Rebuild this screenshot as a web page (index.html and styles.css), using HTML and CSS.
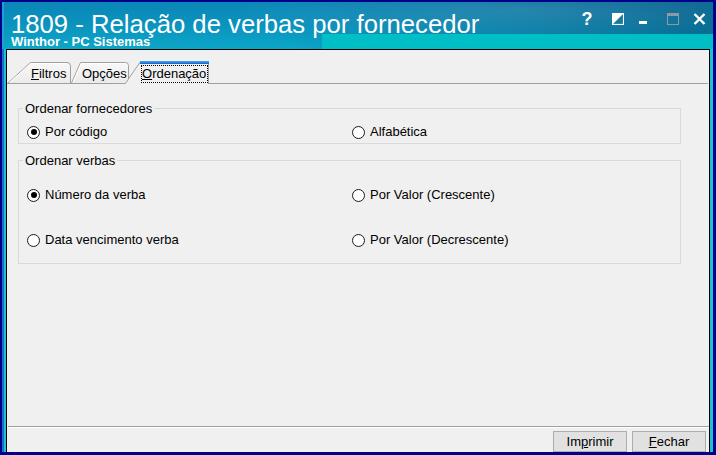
FILE: index.html
```html
<!DOCTYPE html>
<html lang="pt-BR">
<head>
<meta charset="utf-8">
<title>1809 - Relação de verbas por fornecedor</title>
<link rel="stylesheet" href="styles.css">
</head>
<body>
<div class="window">
  <div class="frame">
    <header class="titlebar">
      <div class="titles">
        <div class="title">1809 - Relação de verbas por fornecedor</div>
        <div class="subtitle">Winthor - PC Sistemas</div>
      </div>
      <div class="controls">
        <span class="help">?</span>
        <svg class="ic ic-restore" width="12" height="12" viewBox="0 0 12 12"><rect x="0.5" y="0.5" width="11" height="11" fill="none" stroke="#fff" stroke-width="1.2"/><polygon points="0,0 12,0 0,12" fill="#fff"/></svg>
        <svg class="ic ic-min" width="8" height="3" viewBox="0 0 8 3"><rect x="0" y="0" width="8" height="3" fill="#fff"/></svg>
        <svg class="ic ic-max" width="12" height="12" viewBox="0 0 12 12"><rect x="0.5" y="0.5" width="11" height="11" fill="none" stroke="#8c9ba2" stroke-width="1"/><rect x="0" y="0" width="12" height="3" fill="#8c9ba2"/></svg>
        <svg class="ic ic-close" width="13" height="12" viewBox="0 0 13 12"><path d="M1.5 1 L11.5 11 M11.5 1 L1.5 11" stroke="#fff" stroke-width="2.4" fill="none"/></svg>
      </div>
    </header>
    <main class="panel">
      <nav class="tabstrip">
        <span class="tab tab-filtros"><u>F</u>iltros</span>
        <span class="tab tab-opcoes">Opções</span>
        <span class="tab tab-ordenacao"><span class="focus"><u>O</u>rdenação</span></span>
      </nav>
      <section class="content">
        <fieldset class="group group-forn">
          <legend>Ordenar fornecedores</legend>
          <div class="grid">
            <label class="opt"><span class="radio checked"></span>Por código</label>
            <label class="opt"><span class="radio"></span>Alfabética</label>
          </div>
        </fieldset>
        <fieldset class="group group-verbas">
          <legend>Ordenar verbas</legend>
          <div class="grid grid-verbas">
            <label class="opt"><span class="radio checked"></span>Número da verba</label>
            <label class="opt"><span class="radio"></span>Por Valor (Crescente)</label>
            <label class="opt"><span class="radio"></span>Data vencimento verba</label>
            <label class="opt"><span class="radio"></span>Por Valor (Decrescente)</label>
          </div>
        </fieldset>
      </section>
      <footer class="footer">
        <div class="separator"></div>
        <div class="buttons">
          <button class="btn btn-print">Im<u>p</u>rimir</button>
          <button class="btn btn-close"><u>F</u>echar</button>
        </div>
      </footer>
    </main>
  </div>
</div>
</body>
</html>
```
FILE: styles.css
```css
* { box-sizing: border-box; }
html, body { margin: 0; padding: 0; background: #000080; }
body { width: 716px; height: 455px; overflow: hidden; }

.window {
  width: 716px;
  height: 455px;
  background: #00008a;
  padding: 2px 3px 3px 2px;
}
.frame {
  height: 100%;
  display: flex;
  flex-direction: column;
  padding: 0 3px 0 4px;
  background: linear-gradient(to right, #1a6ec8 0 2px, #1ec0d6 2px);
}

/* title bar */
.titlebar {
  height: 47px;
  flex: none;
  display: flex;
  margin: 0 -3px 0 -4px;
  padding-left: 9px;
  background:
    linear-gradient(#00bec6, #00bec6) no-repeat right bottom / calc(100% - 320px) 15px,
    linear-gradient(to right, #1ba2d2 0 2px, transparent 2px, transparent 706px, #0a6f95 706px),
    radial-gradient(ellipse 420px 40px at 520px 8px, rgba(255,255,255,0.12), rgba(255,255,255,0) 70%),
    linear-gradient(to right, rgba(0,0,0,0) 40%, rgba(0,30,70,0.35) 100%),
    linear-gradient(180deg, #0a86b6 0%, #0b92bd 45%, #0ba6c8 100%);
  color: #fff;
  font-family: "Liberation Sans", Arial, sans-serif;
}
.titles { padding-top: 10px; }
.title {
  font-size: 25.7px;
  line-height: 24px;
  white-space: nowrap;
}
.subtitle {
  font-size: 13px;
  line-height: 12px;
  font-weight: bold;
  white-space: nowrap;
}
.controls {
  margin-left: auto;
  display: flex;
  align-items: flex-start;
  padding-top: 9px;
  padding-right: 7px;
}
.help {
  width: 12px;
  font-size: 18px;
  line-height: 16px;
  font-weight: bold;
  text-align: center;
}
.ic { display: block; flex: none; }
.ic-restore { margin-left: 19px; margin-top: 2px; }
.ic-min { margin-left: 15px; margin-top: 10px; }
.ic-max { margin-left: 20px; margin-top: 2px; }
.ic-close { margin-left: 14px; margin-top: 2px; }

/* panel */
.panel {
  flex: 1;
  min-height: 0;
  display: flex;
  flex-direction: column;
  background: #f0f0f0;
  border: 1px solid #000;
  border-bottom: none;
  font-family: "Liberation Sans", Arial, sans-serif;
  font-size: 13px;
  color: #000;
}

.tabstrip {
  height: 34px;
  flex: none;
  display: flex;
  align-items: flex-start;
  padding-top: 15px;
  padding-left: 23px;
  background: url("data:image/svg+xml;utf8,<svg xmlns='http://www.w3.org/2000/svg' width='701' height='34'><defs><linearGradient id='g' x1='0' y1='0' x2='0' y2='1'><stop offset='0' stop-color='%23f8f8f8'/><stop offset='1' stop-color='%23ebebeb'/></linearGradient><linearGradient id='b' x1='0' y1='0' x2='0' y2='1'><stop offset='0' stop-color='%2355a6f0'/><stop offset='1' stop-color='%230a64cc'/></linearGradient></defs><path d='M64.5 33 L73.5 12.5 H118.5 Q121.5 12.5 121.5 15.5 V33' fill='url(%23g)' stroke='%23a0a0a0'/><path d='M1 33 L23.5 12.5 H60 Q63.5 12.5 63.5 16 V33' fill='url(%23g)' stroke='%23a0a0a0'/><path d='M2.5 32.5 L24 13.5 H60' fill='none' stroke='%23ffffff'/><path d='M66 32.5 L74.3 13.5 H118' fill='none' stroke='%23ffffff'/><path d='M118 34 L133.5 11.5 H201.5 V34' fill='%23f0f0f0' stroke='%23a0a0a0'/><rect x='133' y='11' width='69' height='3' fill='url(%23b)'/><path d='M0 33.5 H118 M201 33.5 H701' stroke='%23a0a0a0'/></svg>") no-repeat 0 0;
}
.tab {
  display: block;
  line-height: 16px;
  border: 1px solid transparent;
  white-space: nowrap;
}
.tab-filtros { width: 51px; }
.tab-opcoes { width: 60px; }
.tab-ordenacao { border: none; }
.focus {
  display: block;
  line-height: 16px;
  border: 1px dotted #000;
  padding: 0 1px 0 0;
}

/* content */
.content {
  flex: 1;
  padding: 17px 0 0 11px;
}
.group {
  margin: 0;
  width: 663px;
  border: 1px solid #d9d9d9;
  padding: 8px 0 3px 8px;
  min-inline-size: 0;
}
.group legend {
  padding: 0 2px;
  margin-left: -4px;
  line-height: 15px;
}
.group-verbas {
  margin-top: 9px;
  padding: 19px 0 15px 8px;
}
.grid {
  display: grid;
  grid-template-columns: 325px 1fr;
  row-gap: 29px;
}
.opt {
  display: flex;
  align-items: center;
  line-height: 16px;
  height: 16px;
  white-space: nowrap;
}
.radio {
  width: 13px;
  height: 13px;
  flex: none;
  border: 1px solid #1a1a1a;
  border-radius: 50%;
  background: #fff;
  margin-right: 5px;
  display: flex;
  align-items: center;
  justify-content: center;
}
.radio.checked::after {
  content: "";
  width: 6px;
  height: 6px;
  border-radius: 50%;
  background: #000;
}

/* footer */
.footer { flex: none; }
.separator {
  height: 2px;
  margin-left: 1px;
  border-top: 1px solid #a0a0a0;
  border-bottom: 1px solid #ffffff;
}
.buttons {
  display: flex;
  justify-content: flex-end;
  gap: 5px;
  padding: 3px 3px 0 0;
}
.btn {
  height: 21px;
  padding: 0;
  border: 1px solid #adadad;
  background: #e1e1e1;
  font-family: "Liberation Sans", Arial, sans-serif;
  font-size: 13px;
  line-height: 19px;
  color: #000;
}
.btn-print { width: 74px; }
.btn-close { width: 74px; }
```
